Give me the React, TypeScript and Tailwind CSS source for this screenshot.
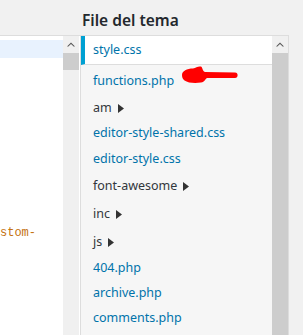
import React from "react";

type Entry = {
  name: string;
  folder?: boolean;
  h: string;
};

const entries: Entry[] = [
  { name: "functions.php", h: "h-[28px]" },
  { name: "am", folder: true, h: "h-[26px]" },
  { name: "editor-style-shared.css", h: "h-[25px]" },
  { name: "editor-style.css", h: "h-[26px]" },
  { name: "font-awesome", folder: true, h: "h-[28px]" },
  { name: "inc", folder: true, h: "h-[29px]" },
  { name: "js", folder: true, h: "h-[27px]" },
  { name: "404.php", h: "h-[25px]" },
  { name: "archive.php", h: "h-[25px]" },
  { name: "comments.php", h: "h-[24px]" },
];

function UpArrow() {
  return (
    <svg width="8" height="5" viewBox="0 0 8 5" className="block">
      <path d="M0 4.5 L4 0.5 L8 4.5 L6.6 4.5 L4 2 L1.4 4.5 Z" fill="#555" />
    </svg>
  );
}

function Caret() {
  return (
    <svg width="6" height="9" viewBox="0 0 6 9" className="ml-[6px] block">
      <path d="M0 0 L6 4.5 L0 9 Z" fill="#333" />
    </svg>
  );
}

export default function App() {
  return (
    <div
      className="relative flex h-[335px] w-[303px] overflow-hidden bg-[#f1f1f1] text-[12.5px]"
      style={{ fontFamily: '"Noto Sans", "Open Sans", sans-serif' }}
    >
      {/* editor column */}
      <div className="flex w-[81px] shrink-0 flex-col pt-[35px]">
        <div className="flex flex-1 border-t border-r border-[#dddddd] bg-white">
          <div className="flex w-[63px] flex-col">
            <div className="mt-[4px] h-[18px] bg-[#e8f2fe]" />
            <div
              className="mt-[167px] text-[12px] leading-[16px] text-[#c4720f]"
              style={{ fontFamily: '"Liberation Mono", monospace' }}
            >
              stom-
            </div>
          </div>
          <div className="flex w-[16px] flex-col bg-[#f0f0f0]">
            <div className="flex h-[17px] items-center justify-center">
              <UpArrow />
            </div>
            <div className="h-[17px] bg-[#cdcdcd]" />
          </div>
        </div>
      </div>

      {/* theme files column */}
      <div className="flex w-[208px] shrink-0 flex-col">
        <div className="flex h-[35px] items-end pb-[7px] pl-[1px]">
          <h2 className="text-[15.5px] font-semibold leading-none text-[#23282d]">
            File del tema
          </h2>
        </div>
        <div className="flex flex-1 border-t border-r border-[#dddddd]">
          <div className="flex w-[191px] flex-col bg-[#f6f6f6]">
            <div className="flex h-[29px] items-center border-b border-l-4 border-b-[#dddddd] border-l-[#00a0d2] bg-white pl-[8px] text-[#0073aa]">
              style.css
            </div>
            <ul className="pt-[2px]">
              {entries.map((e) => (
                <li
                  key={e.name}
                  className={`flex items-center pl-[12px] ${e.h} ${
                    e.folder ? "text-[#32373c]" : "text-[#0073aa]"
                  }`}
                >
                  {e.name}
                  {e.folder && <Caret />}
                </li>
              ))}
            </ul>
          </div>
          <div className="flex w-[16px] flex-col bg-[#f0f0f0]">
            <div className="flex h-[17px] items-center justify-center">
              <UpArrow />
            </div>
            <div className="flex-1 bg-[#cdcdcd]" />
          </div>
        </div>
      </div>

      {/* hand drawn red arrow */}
      <svg
        width="60"
        height="20"
        viewBox="0 0 60 20"
        className="absolute left-[180px] top-[65px]"
      >
        <path
          d="M2 10 C2 6 7 3.5 13 3.5 C16 2.5 18 1 21 1.5 C23 2.5 22 6 25 7 L55 7.5 C58.5 7.5 58.5 13 55 13 L27 13 C25 14 25 17 21 17.5 C15 18.5 8 18 4.5 15.5 C2.5 14 2 12 2 10 Z"
          fill="#ff0000"
        />
      </svg>
    </div>
  );
}
